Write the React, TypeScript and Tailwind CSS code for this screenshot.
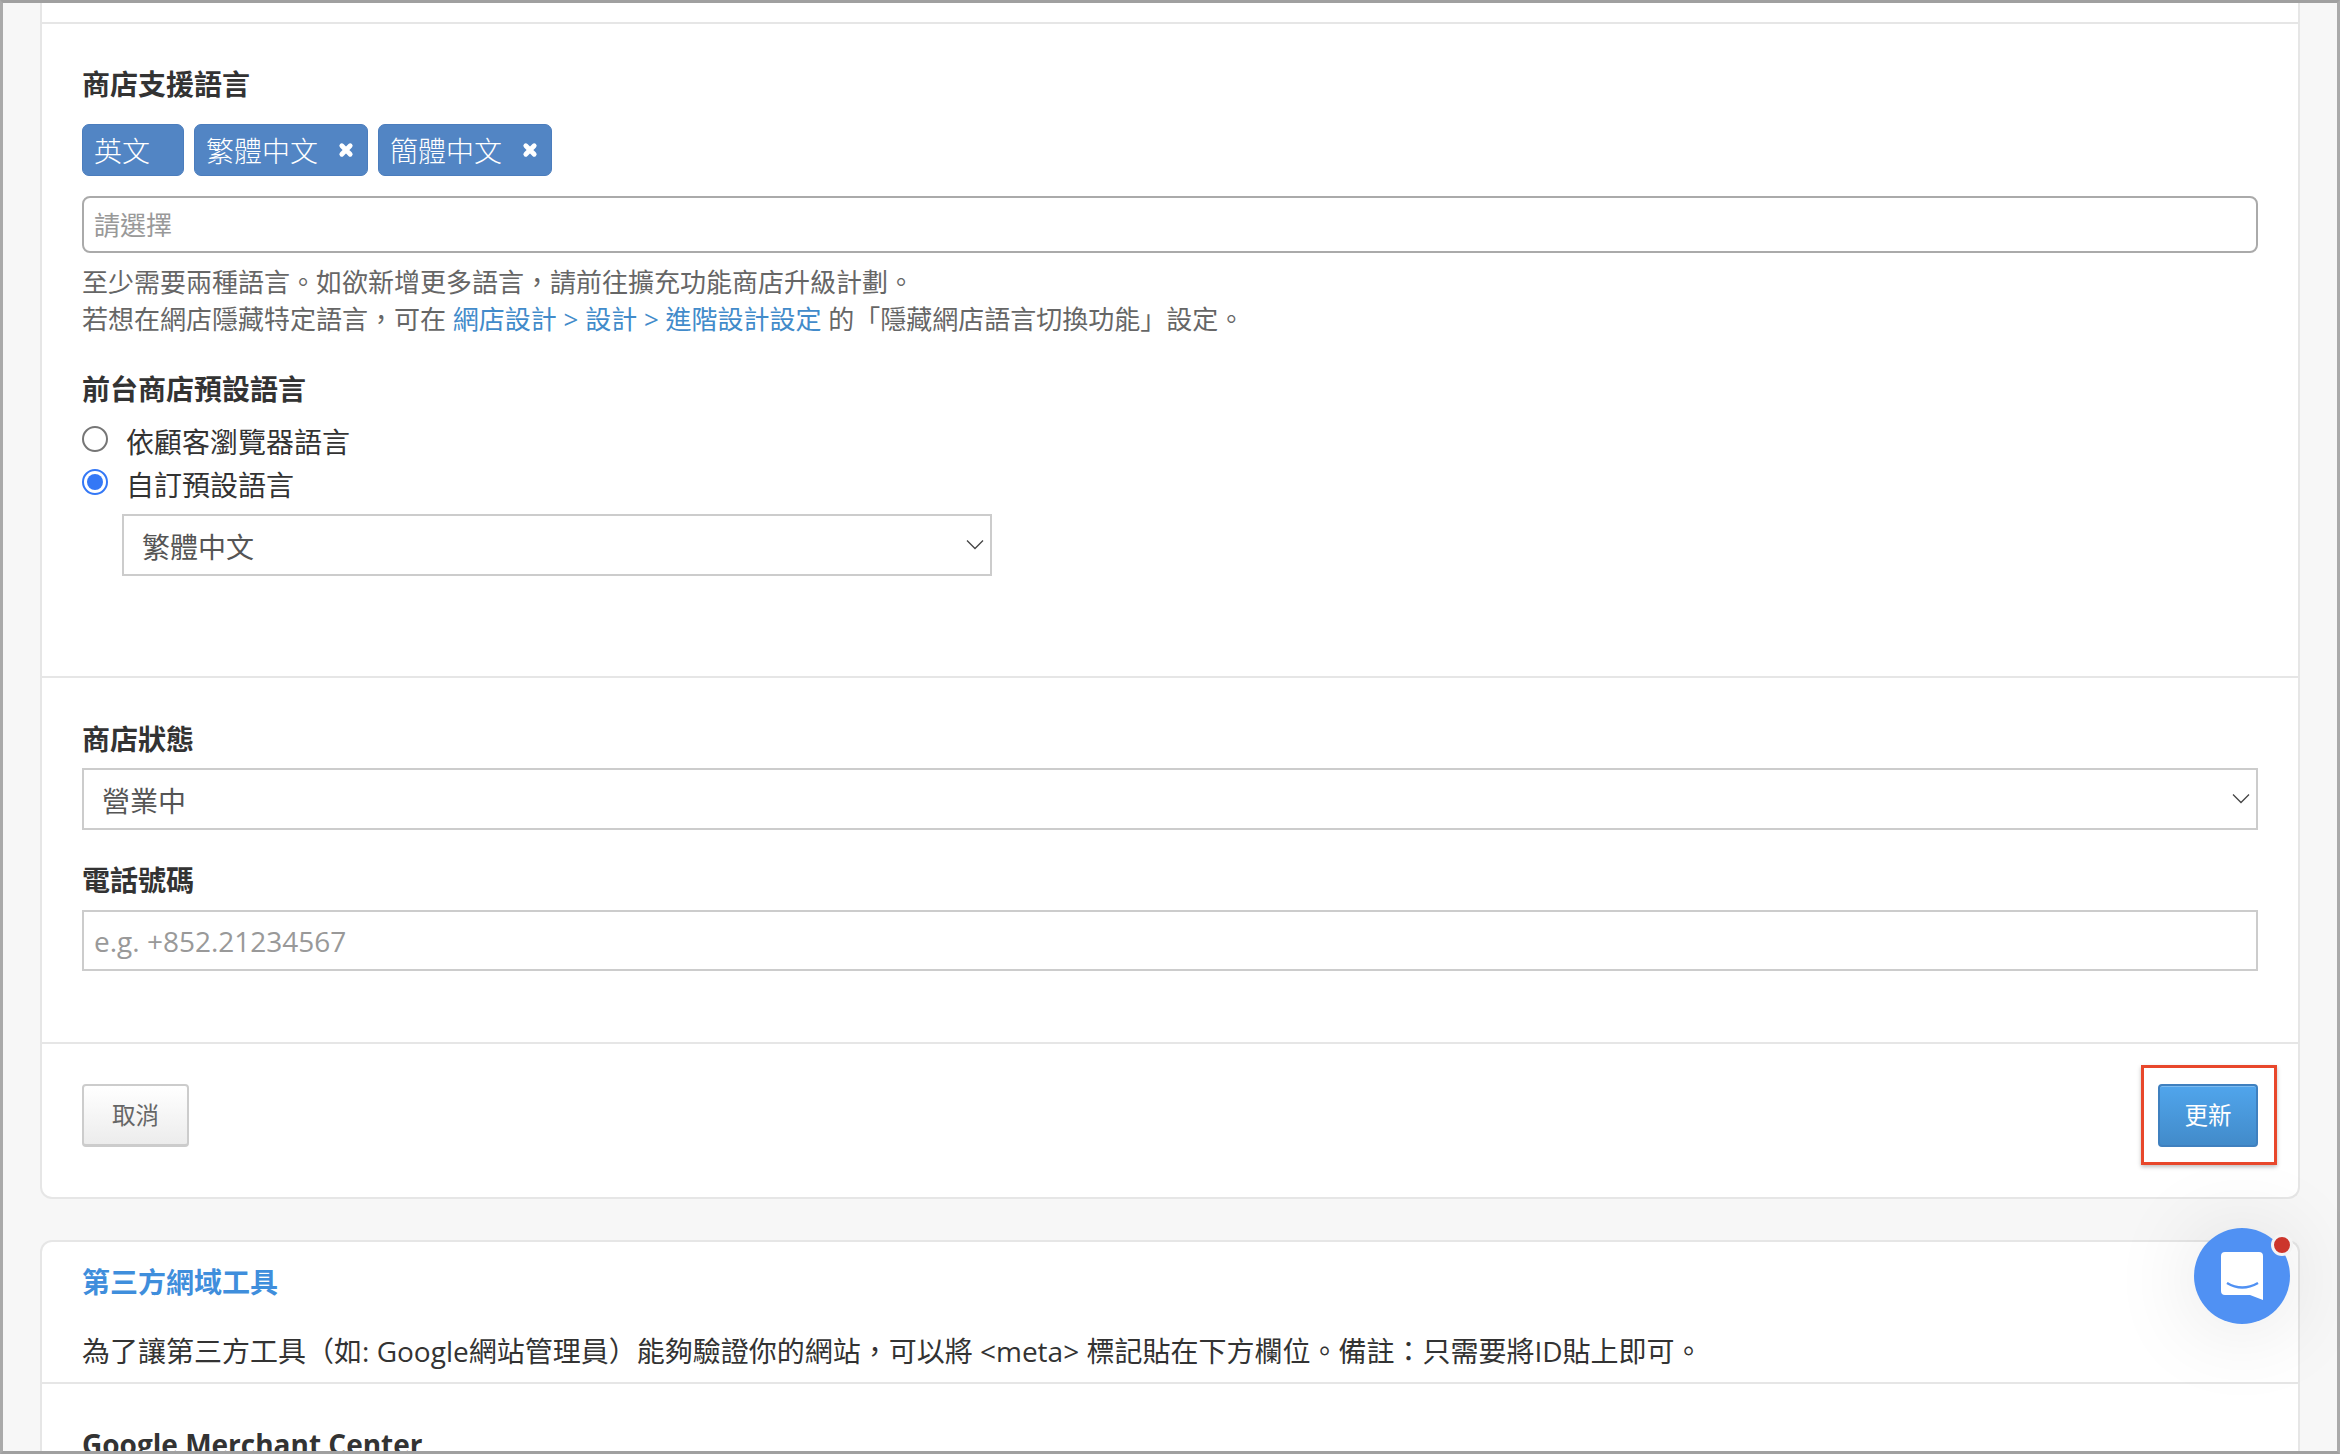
const fontStack = "font-['Open_Sans','Noto_Sans_CJK_TC',sans-serif]";

function Chevron() {
  return (
    <svg viewBox="0 0 18 11" className="pointer-events-none absolute right-[8px] top-[25px] h-[11px] w-[18px] text-[#444]" fill="none" stroke="currentColor" strokeWidth="1.3">
      <path d="M1 1.5 L9 9.5 L17 1.5" />
    </svg>
  );
}

function Tag({ label, removable, width }: { label: string; removable?: boolean; width: string }) {
  return (
    <span className={`flex h-[52px] items-center justify-between rounded-[7px] border border-[#4b7dbd] bg-[#5285c4] pl-[11px] pr-[13px] pt-[2px] text-[28px] font-light text-white ${width}`}>
      {label}
      {removable && (
        <svg viewBox="0 0 16 16" className="-mt-[2px] h-[16px] w-[16px]" fill="none" stroke="#fff" strokeWidth="4.8" strokeLinecap="round">
          <path d="M3.8 3.8 L12.2 12.2 M12.2 3.8 L3.8 12.2" />
        </svg>
      )}
    </span>
  );
}

function Radio({ checked, label }: { checked?: boolean; label: string }) {
  return (
    <label className="flex h-[43px] items-center gap-[18px] text-[28px] text-[#333]">
      {checked ? (
        <span className="-mt-[6px] flex h-[26px] w-[26px] items-center justify-center rounded-full border-2 border-[#3478f6] bg-white">
          <span className="h-[16px] w-[16px] rounded-full bg-[#3478f6]" />
        </span>
      ) : (
        <span className="-mt-[6px] h-[26px] w-[26px] rounded-full border-2 border-[#767676] bg-white" />
      )}
      {label}
    </label>
  );
}

function Select({ value, className }: { value: string; className: string }) {
  return (
    <div className={`relative ${className}`}>
      <select className="h-full w-full appearance-none border-2 border-[#ccc] bg-white px-[18px] pt-[4px] text-[28px] text-[#555] outline-none" defaultValue={value}>
        <option>{value}</option>
      </select>
      <Chevron />
    </div>
  );
}

const heading = 'text-[28px] font-bold leading-[38px] text-[#333]';

export default function App() {
  return (
    <div className={`h-[1454px] overflow-hidden border-x-[3px] border-y-[3px] border-x-[#aaaaaa] border-y-[#a0a0a0] bg-[#f7f7f7] px-[37px] ${fontStack}`}>
      {/* Main settings card, scrolled so its top is cut off */}
      <div className="rounded-b-[12px] border-x-2 border-b-2 border-[#e6e6e6] bg-white">
        <div className="h-[19px]" />

        <section className="border-t-2 border-[#e6e6e6] px-[40px] pb-[100px] pt-[41px]">
          <h3 className={heading}>商店支援語言</h3>
          <div className="mt-[21px] flex gap-[10px]">
            <Tag label="英文" width="w-[102px]" />
            <Tag label="繁體中文" removable width="w-[174px]" />
            <Tag label="簡體中文" removable width="w-[174px]" />
          </div>
          <input
            placeholder="請選擇"
            className="mt-[20px] h-[57px] w-full rounded-[8px] border-2 border-[#aaa] bg-white px-[10px] text-[26px] outline-none placeholder:text-[#999]"
          />
          <p className="mt-[11px] text-[26px] leading-[37px] text-[#666]">
            至少需要兩種語言。如欲新增更多語言&#xFF0C;請前往擴充功能商店升級計劃。
            <br />
            若想在網店隱藏特定語言&#xFF0C;可在 <a className="text-[#428bca]">網店設計 &gt; 設計 &gt; 進階設計設定</a> 的「隱藏網店語言切換功能」設定。
          </p>

          <h3 className={`mt-[32px] ${heading}`}>前台商店預設語言</h3>
          <div className="mt-[12px]">
            <Radio label="依顧客瀏覽器語言" />
            <Radio checked label="自訂預設語言" />
          </div>
          <Select value="繁體中文" className="ml-[40px] mt-[8px] h-[62px] w-[870px]" />
        </section>

        <section className="border-t-2 border-[#e6e6e6] px-[40px] pb-[71px] pt-[42px]">
          <h3 className={heading}>商店狀態</h3>
          <Select value="營業中" className="mt-[10px] h-[62px] w-full" />
          <h3 className={`mt-[31px] ${heading}`}>電話號碼</h3>
          <input
            placeholder="e.g. +852.21234567"
            className="mt-[11px] h-[61px] w-full border-2 border-[#ccc] bg-white px-[10px] text-[28px] outline-none placeholder:text-[#999]"
          />
        </section>

        <div className="flex items-start justify-between border-t-2 border-[#e6e6e6] px-[40px] pb-[50px] pt-[40px]">
          <button className="h-[63px] w-[107px] rounded-[4px] border-2 border-b-[3px] border-[#ccc] bg-gradient-to-b from-white to-[#ececec] pt-[1px] text-[23.5px] text-[#666]">
            取消
          </button>
          <div className="relative">
            <button className="h-[63px] w-[100px] rounded-[4px] border-2 border-[#3f80bf] bg-gradient-to-b from-[#50a5ec] to-[#428bca] pt-[1px] text-[23.5px] text-white shadow-[inset_0_1px_0_rgba(255,255,255,0.25)]">
              更新
            </button>
            <div className="pointer-events-none absolute -bottom-[18px] -left-[17px] -right-[19px] -top-[19px] border-[3px] border-[#e8472b] shadow-[0_2px_4px_rgba(0,0,0,0.25)]" />
          </div>
        </div>
      </div>

      {/* Third party domain tools card */}
      <div className="mt-[41px] rounded-t-[12px] border-x-2 border-t-2 border-[#e6e6e6] bg-white">
        <div className="border-b-2 border-[#e6e6e6] px-[40px] pb-[12px] pt-[21px]">
          <h3 className="text-[28px] font-bold leading-[38px] text-[#3f8edc]">第三方網域工具</h3>
          <p className="mt-[31px] text-[28px] leading-[38px] text-[#333]">
            為了讓第三方工具&#xFF08;如: Google網站管理員&#xFF09;能夠驗證你的網站&#xFF0C;可以將 &lt;meta&gt; 標記貼在下方欄位。備註&#xFF1A;只需要將ID貼上即可。
          </p>
        </div>
        <div className="px-[40px] pt-[41px]">
          <h3 className="text-[28px] font-bold leading-[38px] text-[#333]">Google Merchant Center</h3>
        </div>
      </div>

      {/* Chat launcher floating over the page */}
      <div className="fixed right-[50px] top-[1228px] flex h-[96px] w-[96px] items-center justify-center rounded-full bg-[#5091f3] shadow-[0_4px_90px_rgba(0,0,0,0.12)]">
        <svg viewBox="0 0 42 48" className="h-[48px] w-[42px]">
          <path d="M4 0H38a4 4 0 0 1 4 4V48L29 43H4a4 4 0 0 1-4-4V4a4 4 0 0 1 4-4Z" fill="#fff" />
          <path d="M6 31Q21 40 37 31" fill="none" stroke="#5091f3" strokeWidth="2.5" />
        </svg>
        <span className="absolute -right-[3px] top-[6px] h-[22px] w-[22px] rounded-full border-[3px] border-[#f4f4f4] bg-[#cc352c]" />
      </div>
    </div>
  );
}
